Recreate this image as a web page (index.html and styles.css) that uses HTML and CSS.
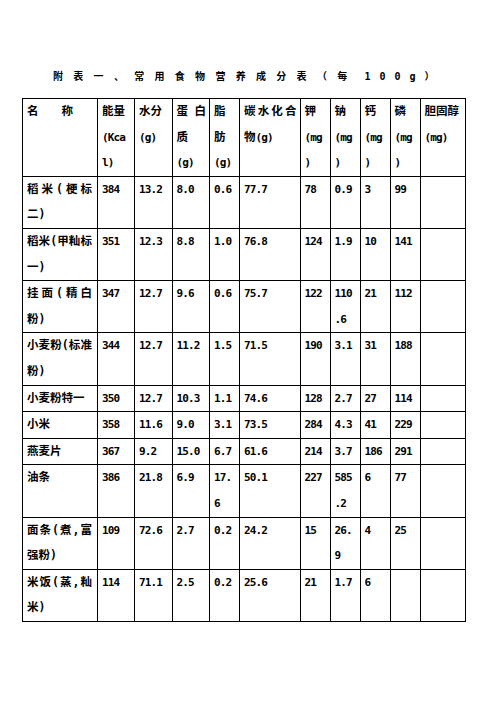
FILE: index.html
```html
<!DOCTYPE html>
<html lang="zh-CN">
<head>
<meta charset="utf-8">
<title>附表一、常用食物营养成分表</title>
<link rel="stylesheet" href="styles.css">
</head>
<body>
<div class="page">
  <h1 class="title">附表一、常用食物营养成分表（每<span class="num-gap">100g</span>）</h1>
  <table class="nutri">
    <colgroup>
      <col class="c-name"><col class="c-30"><col class="c-37"><col class="c-37"><col class="c-30s"><col class="c-60"><col class="c-30s"><col class="c-30s"><col class="c-30s"><col class="c-30s"><col class="c-45">
    </colgroup>
    <thead>
      <tr>
        <th>名　　称</th>
        <th>能量<br><span class="h">(Kca</span><br><span class="h">l)</span></th>
        <th>水分<br><span class="h">(g)</span></th>
        <th><span class="jl">蛋白</span>质<br><span class="h">(g)</span></th>
        <th>脂<br>肪<br><span class="h">(g)</span></th>
        <th><span class="jl">碳水化合</span>物<span class="h">(g)</span></th>
        <th>钾<br><span class="h">(mg</span><br><span class="h">)</span></th>
        <th>钠<br><span class="h">(mg</span><br><span class="h">)</span></th>
        <th>钙<br><span class="h">(mg</span><br><span class="h">)</span></th>
        <th>磷<br><span class="h">(mg</span><br><span class="h">)</span></th>
        <th>胆固醇<br><span class="h">(mg)</span></th>
      </tr>
    </thead>
    <tbody>
      <tr><td class="nm"><span class="jl">稻米(梗标</span>二)</td><td>384</td><td>13.2</td><td>8.0</td><td>0.6</td><td>77.7</td><td>78</td><td>0.9</td><td>3</td><td>99</td><td></td></tr>
      <tr><td class="nm"><span class="jl">稻米(甲籼标</span>一)</td><td>351</td><td>12.3</td><td>8.8</td><td>1.0</td><td>76.8</td><td>124</td><td>1.9</td><td>10</td><td>141</td><td></td></tr>
      <tr><td class="nm"><span class="jl">挂面(精白</span>粉)</td><td>347</td><td>12.7</td><td>9.6</td><td>0.6</td><td>75.7</td><td>122</td><td>110<br>.6</td><td>21</td><td>112</td><td></td></tr>
      <tr><td class="nm"><span class="jl">小麦粉(标准</span>粉)</td><td>344</td><td>12.7</td><td>11.2</td><td>1.5</td><td>71.5</td><td>190</td><td>3.1</td><td>31</td><td>188</td><td></td></tr>
      <tr><td class="nm">小麦粉特一</td><td>350</td><td>12.7</td><td>10.3</td><td>1.1</td><td>74.6</td><td>128</td><td>2.7</td><td>27</td><td>114</td><td></td></tr>
      <tr><td class="nm">小米</td><td>358</td><td>11.6</td><td>9.0</td><td>3.1</td><td>73.5</td><td>284</td><td>4.3</td><td>41</td><td>229</td><td></td></tr>
      <tr><td class="nm">燕麦片</td><td>367</td><td>9.2</td><td>15.0</td><td>6.7</td><td>61.6</td><td>214</td><td>3.7</td><td>186</td><td>291</td><td></td></tr>
      <tr><td class="nm">油条</td><td>386</td><td>21.8</td><td>6.9</td><td>17.<br>6</td><td>50.1</td><td>227</td><td>585<br>.2</td><td>6</td><td>77</td><td></td></tr>
      <tr><td class="nm"><span class="jl">面条(煮,富</span>强粉)</td><td>109</td><td>72.6</td><td>2.7</td><td>0.2</td><td>24.2</td><td>15</td><td>26.<br>9</td><td>4</td><td>25</td><td></td></tr>
      <tr><td class="nm"><span class="jl">米饭(蒸,籼</span>米)</td><td>114</td><td>71.1</td><td>2.5</td><td>0.2</td><td>25.6</td><td>21</td><td>1.7</td><td>6</td><td></td><td></td></tr>
    </tbody>
  </table>
</div>
</body>
</html>
```
FILE: styles.css
```css
html, body {
  margin: 0;
  padding: 0;
  background: #ffffff;
  color: #000000;
}

.page {
  padding: 68px 0 0 22px;
}

.title {
  margin: 0 0 14px 31px;
  font-family: "Noto Sans CJK SC", sans-serif;
  font-weight: 700;
  font-size: 10px;
  line-height: 15px;
  letter-spacing: 10.3px;
  white-space: nowrap;
}

.num-gap {
  margin-left: 7px;
  font-family: "DejaVu Sans Mono", monospace;
  letter-spacing: 9px;
}

.nutri {
  border-collapse: collapse;
  table-layout: fixed;
  width: 442px;
  font-family: "DejaVu Sans Mono", "Noto Sans CJK SC", monospace;
  font-size: 11.5px;
  font-weight: 700;
}

.c-name { width: 75px; }
.c-30 { width: 37px; }
.c-37 { width: 37.5px; }
.c-30s { width: 30px; }
.c-60 { width: 60.5px; }
.c-45 { width: 45px; }

.nutri th,
.nutri td {
  border: 1px solid #000;
  padding: 0 3px 0 4px;
  line-height: 25.6px;
  vertical-align: top;
  text-align: left;
  font-weight: 700;
  white-space: nowrap;
  overflow: hidden;
}

.nutri td {
  font-size: 11px;
  letter-spacing: -0.9px;
}

.nutri td.nm {
  font-size: 11.5px;
  letter-spacing: 0;
  padding-right: 5px;
}

.h {
  font-size: 11px;
  letter-spacing: -0.9px;
}

.jl {
  display: block;
  text-align: justify;
  text-align-last: justify;
}
```
